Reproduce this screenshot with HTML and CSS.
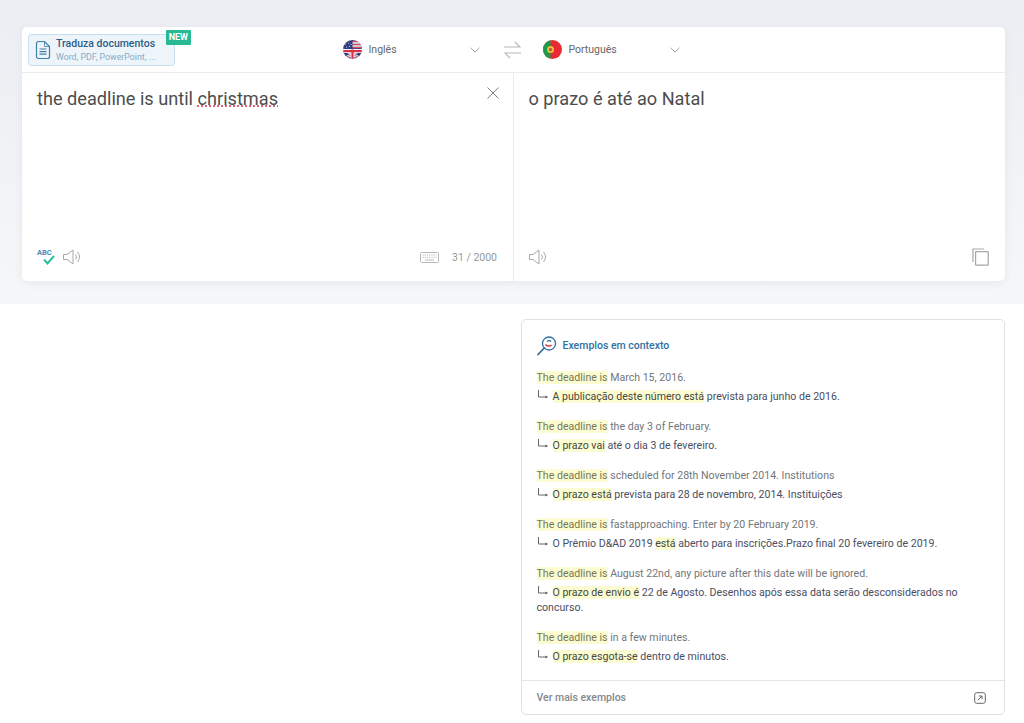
FILE: index.html
```html
<!DOCTYPE html>
<html lang="pt">
<head>
  <meta charset="UTF-8">
  <title>Tradutor</title>
  <link rel="stylesheet" href="styles.css">
</head>
<body>
  <section class="band">
    <div class="translator">
      <div class="toolbar">
        <a class="docButton">
          <svg class="docIcon" width="16" height="20" viewBox="0 0 16 20" fill="none" stroke="#3f7fa8" stroke-width="1.2">
            <path d="M1.5 3.5a2 2 0 0 1 2-2h6l5 5v10a2 2 0 0 1-2 2h-9a2 2 0 0 1-2-2z"/>
            <path d="M9.5 1.5v5h5" stroke-width=".8"/>
            <path d="M4.5 9h7M4.5 11.6h7M4.5 14.2h7"/>
          </svg>
          <span class="docText">
            <strong>Traduza documentos</strong>
            <small>Word, PDF, PowerPoint, ...</small>
          </span>
          <span class="newBadge">NEW</span>
        </a>

        <div class="lang langFrom">
          <svg width="19" height="19" viewBox="0 0 38 38">
            <defs><clipPath id="ukClip"><circle cx="19" cy="19" r="19"/></clipPath></defs>
            <g clip-path="url(#ukClip)">
              <rect width="38" height="38" fill="#2f3f80"/>
              <path d="M19 3H38M19 9H38M19 15H38" stroke="#e0485a" stroke-width="3"/>
              <path d="M19 6H38M19 12H38" stroke="#f4f4f4" stroke-width="3"/>
              <path d="M5 8h.01M11 6h.01M16 9h.01M7 14h.01M13 13h.01" stroke="#dfe4f2" stroke-width="2.4" stroke-linecap="round"/>
              <path d="M0 19L38 38M38 19L0 38" stroke="#fff" stroke-width="5"/>
              <path d="M0 19L38 38M38 19L0 38" stroke="#d8324a" stroke-width="2"/>
              <path d="M19 19V38M0 22H38" stroke="#fff" stroke-width="8"/>
              <path d="M19 19V38M0 22H38" stroke="#d8324a" stroke-width="4.5"/>
            </g>
          </svg>
          <span class="langName">Inglês</span>
          <svg class="chevron" width="10" height="6" viewBox="0 0 10 6" fill="none" stroke="#9aa3ab"><path d="M.5.8L5 5l4.5-4.2"/></svg>
        </div>

        <svg class="swap" width="17" height="18" viewBox="0 0 17 18" fill="none" stroke="#b4b8bc" stroke-width="1.2">
          <path d="M0 6h16L11 1M17 12H1l5 5"/>
        </svg>

        <div class="lang langTo">
          <svg width="19" height="19" viewBox="0 0 38 38">
            <defs><clipPath id="ptClip"><circle cx="19" cy="19" r="19"/></clipPath></defs>
            <g clip-path="url(#ptClip)">
              <rect width="38" height="38" fill="#ea2a33"/>
              <rect width="15" height="38" fill="#1d9a4a"/>
              <circle cx="15" cy="19" r="7" fill="#e8c23a"/>
              <circle cx="15" cy="19" r="3.5" fill="#c9564a"/>
            </g>
          </svg>
          <span class="langName">Português</span>
          <svg class="chevron" width="10" height="6" viewBox="0 0 10 6" fill="none" stroke="#9aa3ab"><path d="M.5.8L5 5l4.5-4.2"/></svg>
        </div>
      </div>

      <div class="panes">
        <div class="pane">
          <div class="paneTop">
            <p class="paneText">the deadline is until <span class="misspelled">christmas</span></p>
            <svg class="clear" width="12" height="12" viewBox="0 0 12 12" stroke="#808080" stroke-width="1"><path d="M.5.5l11 11M11.5.5l-11 11"/></svg>
          </div>
          <div class="paneBottom">
            <span class="spell">
              <span class="abc">ABC</span>
              <svg width="12" height="10" viewBox="0 0 12 10" fill="none" stroke="#2cc0a0" stroke-width="2"><path d="M1 4.5l3.5 4L11 1"/></svg>
            </span>
            <svg class="speaker" width="18" height="16" viewBox="0 0 18 16" fill="none" stroke="#a4a8ac"><path d="M.5 5.5h3.5L10 1v14L4 10.5H.5zM12.5 5.5a4 4 0 0 1 0 5M14.5 3a8 8 0 0 1 0 10"/></svg>
            <span class="spacer"></span>
            <svg class="keyboard" width="19" height="11" viewBox="0 0 19 11" fill="none" stroke="#b4b8bc"><rect x=".5" y=".5" width="18" height="10" rx="1"/><path d="M2.5 3h14M2.5 5.3h14" stroke-dasharray="1.2 1"/><path d="M5 8h9"/></svg>
            <span class="counter">31 / 2000</span>
          </div>
        </div>
        <div class="pane paneTarget">
          <div class="paneTop">
            <p class="paneText">o prazo é até ao Natal</p>
          </div>
          <div class="paneBottom">
            <svg class="speaker" width="18" height="16" viewBox="0 0 18 16" fill="none" stroke="#a4a8ac"><path d="M.5 5.5h3.5L10 1v14L4 10.5H.5zM12.5 5.5a4 4 0 0 1 0 5M14.5 3a8 8 0 0 1 0 10"/></svg>
            <span class="spacer"></span>
            <svg class="copy" width="17" height="18" viewBox="0 0 17 18" fill="none" stroke="#a4a8ac" stroke-width="1.2"><path d="M1 14V1h11"/><rect x="3.6" y="3.6" width="12.6" height="13.6" rx=".5"/></svg>
          </div>
        </div>
      </div>
    </div>
  </section>

  <section class="results">
    <div class="examples">
      <div class="examplesBody">
        <h3 class="examplesTitle">
          <svg width="20" height="20" viewBox="0 0 20 20" fill="none">
            <circle cx="12" cy="7.5" r="6.5" stroke="#2f6f9f" stroke-width="1.3"/>
            <path d="M7.2 12L1 18.5" stroke="#2f6f9f" stroke-width="1.8" stroke-linecap="round"/>
            <path d="M8.5 8.5c1.5 2 4.5 2 6 .5" stroke="#d8324a" stroke-width="1.6"/>
            <path d="M10 5.5c1.2-1 3-1 4.2 0" stroke="#2f6f9f" stroke-width="1.2"/>
          </svg>
          Exemplos em contexto
        </h3>

        <div class="example">
          <p class="source"><mark>The deadline is</mark> March 15, 2016.</p>
          <p class="target"><svg class="arrow" width="12" height="10" viewBox="0 0 12 10" fill="none" stroke="#666"><path d="M1.5 0v7H9"/><path d="M8.5 5.5L11 7 8.5 8.5z" fill="#555" stroke="none"/></svg><mark>A publicação deste número está</mark> prevista para junho de 2016.</p>
        </div>
        <div class="example">
          <p class="source"><mark>The deadline is</mark> the day 3 of February.</p>
          <p class="target"><svg class="arrow" width="12" height="10" viewBox="0 0 12 10" fill="none" stroke="#666"><path d="M1.5 0v7H9"/><path d="M8.5 5.5L11 7 8.5 8.5z" fill="#555" stroke="none"/></svg><mark>O prazo vai</mark> até o dia 3 de fevereiro.</p>
        </div>
        <div class="example">
          <p class="source"><mark>The deadline is</mark> scheduled for 28th November 2014. Institutions</p>
          <p class="target"><svg class="arrow" width="12" height="10" viewBox="0 0 12 10" fill="none" stroke="#666"><path d="M1.5 0v7H9"/><path d="M8.5 5.5L11 7 8.5 8.5z" fill="#555" stroke="none"/></svg><mark>O prazo está</mark> prevista para 28 de novembro, 2014. Instituições</p>
        </div>
        <div class="example">
          <p class="source"><mark>The deadline is</mark> fastapproaching. Enter by 20 February 2019.</p>
          <p class="target"><svg class="arrow" width="12" height="10" viewBox="0 0 12 10" fill="none" stroke="#666"><path d="M1.5 0v7H9"/><path d="M8.5 5.5L11 7 8.5 8.5z" fill="#555" stroke="none"/></svg>O Prêmio D&amp;AD 2019 <mark>está</mark> aberto para inscrições.Prazo final 20 fevereiro de 2019.</p>
        </div>
        <div class="example">
          <p class="source"><mark>The deadline is</mark> August 22nd, any picture after this date will be ignored.</p>
          <p class="target"><svg class="arrow" width="12" height="10" viewBox="0 0 12 10" fill="none" stroke="#666"><path d="M1.5 0v7H9"/><path d="M8.5 5.5L11 7 8.5 8.5z" fill="#555" stroke="none"/></svg><mark>O prazo de envio é</mark> 22 de Agosto. Desenhos após essa data serão desconsiderados no concurso.</p>
        </div>
        <div class="example">
          <p class="source"><mark>The deadline is</mark> in a few minutes.</p>
          <p class="target"><svg class="arrow" width="12" height="10" viewBox="0 0 12 10" fill="none" stroke="#666"><path d="M1.5 0v7H9"/><path d="M8.5 5.5L11 7 8.5 8.5z" fill="#555" stroke="none"/></svg><mark>O prazo esgota-se</mark> dentro de minutos.</p>
        </div>
      </div>
      <div class="examplesFooter">
        <span>Ver mais exemplos</span>
        <svg width="12" height="12" viewBox="0 0 12 12" fill="none" stroke="#666"><rect x=".7" y=".7" width="10.6" height="10.6" rx="2"/><path d="M4 8l3.6-3.6M4.8 4h3.2v3.2"/></svg>
      </div>
    </div>
  </section>
</body>
</html>
```

FILE: styles.css
```css
* {
  box-sizing: border-box;
}

body {
  margin: 0;
  background-color: #fff;
  font-family: Roboto, "Liberation Sans", sans-serif;
  color: #444;
}

p {
  margin: 0;
}

.band {
  height: 304px;
  padding: 27px 19px 23px 22px;
  background: linear-gradient(180deg, #ebeef2 0%, #f5f7f9 100%);
}

.translator {
  height: 254px;
  display: flex;
  flex-direction: column;
  background-color: #fff;
  border-radius: 5px;
  box-shadow: 0 2px 8px rgba(60, 80, 100, 0.08);
}

.toolbar {
  height: 46px;
  display: flex;
  align-items: center;
  padding-left: 6px;
  border-bottom: 1px solid #e9ebed;
}

.docButton {
  position: relative;
  width: 147px;
  height: 32px;
  display: flex;
  align-items: center;
  gap: 5px;
  padding-left: 6px;
  background-color: #eef5fa;
  border: 1px solid #c9dfee;
  border-radius: 3px;
}

.docIcon {
  flex: none;
}

.docText {
  display: flex;
  flex-direction: column;
}

.docText strong {
  font-size: 10.5px;
  font-weight: 500;
  line-height: 14px;
  color: #2c6087;
}

.docText small {
  font-size: 8.8px;
  line-height: 12px;
  color: #86abc8;
}

.newBadge {
  position: absolute;
  top: -5px;
  right: -17px;
  padding: 0 3px;
  font-size: 9px;
  font-weight: 700;
  line-height: 15px;
  color: #fff;
  background-color: #28b893;
  border-radius: 1px;
}

.lang {
  display: flex;
  align-items: center;
  gap: 6.5px;
  font-size: 10.5px;
  color: #666;
}

.langName {
  flex: 1;
}

.langFrom {
  width: 137px;
  margin-left: 168px;
}

.langTo {
  width: 137px;
  margin-left: 22px;
}

.swap {
  margin-left: 24px;
}

.panes {
  flex: 1;
  display: grid;
  grid-template-columns: 491px 1fr;
}

.pane {
  display: flex;
  flex-direction: column;
  justify-content: space-between;
  padding: 14px 15px 15px;
}

.paneTarget {
  border-left: 1px solid #e9ebed;
  padding-left: 14.5px;
}

.paneTop {
  display: flex;
  justify-content: space-between;
  align-items: flex-start;
}

.paneText {
  font-size: 18.15px;
  line-height: 24px;
  color: #4d4d4d;
}

.misspelled {
  text-decoration: underline dotted #e2607a;
}

.clear {
  margin-right: -1px;
}

.paneBottom {
  display: flex;
  align-items: center;
  height: 18px;
}

.spacer {
  flex: 1;
}

.spell {
  position: relative;
  width: 19px;
  height: 16px;
  margin-right: 7px;
}

.spell svg {
  position: absolute;
  left: 6px;
  top: 6px;
}

.abc {
  position: absolute;
  left: 0;
  top: 0;
  font-size: 7.5px;
  font-weight: 700;
  line-height: 8px;
  color: #4a8abc;
}

.keyboard {
  margin-right: -1px;
}

.counter {
  margin-left: 14px;
  margin-right: 1px;
  font-size: 10.5px;
  color: #94999e;
}

.copy {
  margin-right: 1px;
}

.results {
  display: flex;
  justify-content: flex-end;
  padding: 15px 19px 8px 0;
}

.examples {
  width: 484px;
  height: 396px;
  border: 1px solid #dfe2e5;
  border-radius: 5px;
}

.examplesBody {
  height: 360px;
  padding: 16px 14.5px 0;
}

.examplesTitle {
  display: flex;
  align-items: center;
  gap: 6px;
  margin: 0 0 14px;
  font-size: 10.5px;
  font-weight: 500;
  line-height: 20px;
  color: #2f709f;
}

.example {
  margin-bottom: 15px;
  font-size: 10.6px;
  line-height: 15px;
}

.source {
  margin-bottom: 4px;
  color: #73767a;
}

.target {
  color: #4a4e62;
}

.arrow {
  margin-right: 4px;
  vertical-align: 0;
}

mark {
  background-color: #fcfcd2;
  color: inherit;
}

.source mark {
  color: #767856;
}

.target mark {
  color: #45483c;
}

.examplesFooter {
  height: 34px;
  display: flex;
  align-items: center;
  justify-content: space-between;
  padding: 0 18px 0 14.5px;
  border-top: 1px solid #e3e5e7;
  font-size: 10.5px;
  font-weight: 500;
  color: #84888c;
}
```
